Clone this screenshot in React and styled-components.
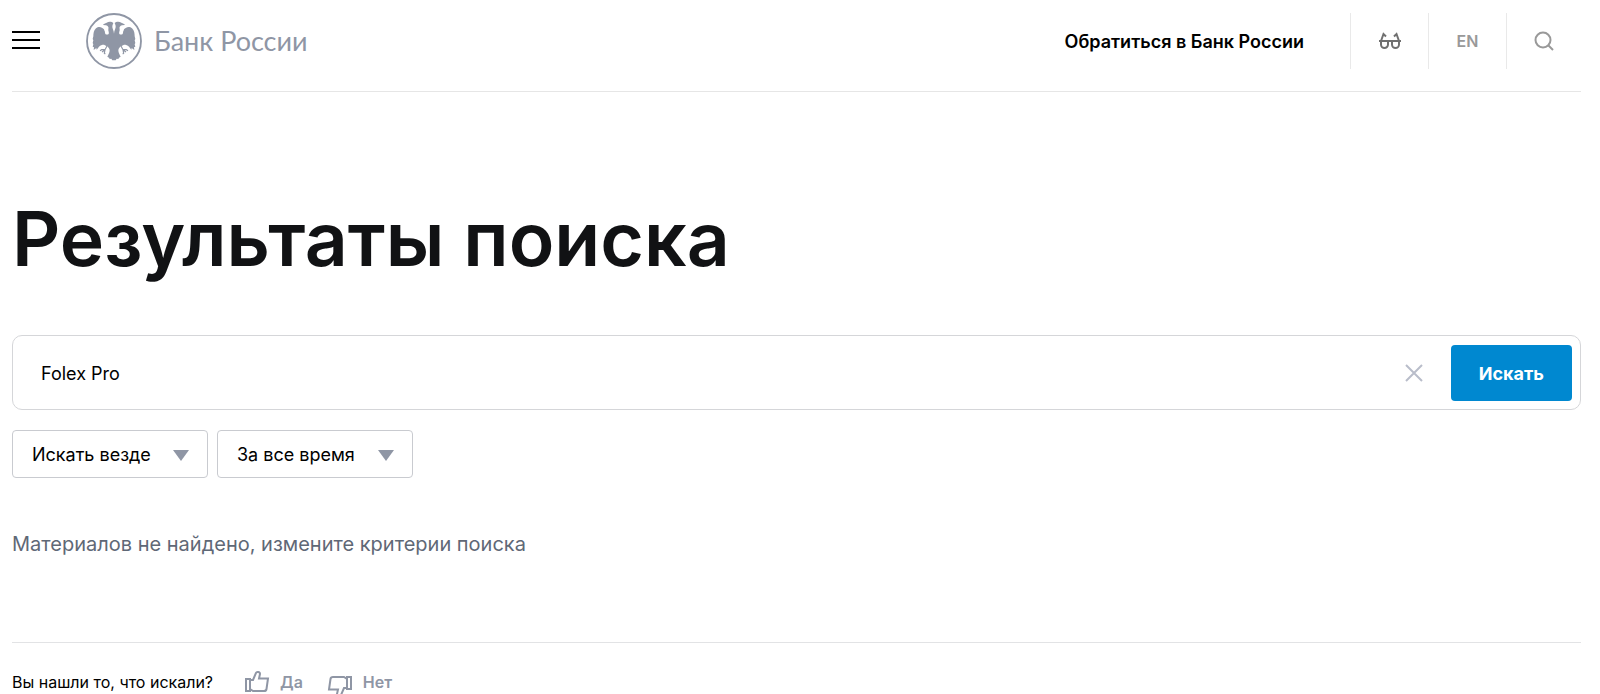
import React, { useState } from "react";
import styled, { createGlobalStyle } from "styled-components";

const GlobalStyle = createGlobalStyle`
  * {
    box-sizing: border-box;
  }
  body {
    margin: 0;
    background: #fff;
    color: #000;
    font-family: Inter, "Open Sans", sans-serif;
    font-size: 18px;
    line-height: 24px;
  }
  button, input, select {
    font: inherit;
    color: inherit;
  }
`;
const Page = styled.div`
  padding: 0 19px 0 12px;
`;
const Header = styled.header`
  display: flex;
  align-items: center;
  height: 92px;
  padding: 0 0 9px;
  border-bottom: 1px solid #e6e6e6;
`;
const IconButton = styled.button`
  display: flex;
  align-items: center;
  justify-content: center;
  padding: 0;
  border: none;
  background: transparent;
  color: ${(props) => props.$color || "#000"};
  cursor: pointer;
`;
const LogoLink = styled.a`
  display: flex;
  align-items: center;
  gap: 12px;
  margin-left: 46px;
  color: #8f96a5;
  font-family: Lato, sans-serif;
  font-size: 27px;
  line-height: 32px;
  text-decoration: none;
`;
const ContactLink = styled.a`
  margin-left: auto;
  margin-right: 46px;
  padding-top: 2px;
  color: #000;
  font-weight: 600;
  text-decoration: none;
`;
const Tools = styled.nav`
  display: flex;
`;
const Tool = styled.div`
  display: flex;
  align-items: center;
  justify-content: center;
  width: 78px;
  height: 56px;
  border-left: 1px solid #e9e9e9;
  &:last-child {
    width: 75px;
  }
`;
const LangLink = styled.a`
  color: #999;
  font-size: 16px;
  font-weight: 600;
  text-decoration: none;
`;
const Title = styled.h1`
  margin: 103px 0 0;
  color: #111214;
  font-size: 75px;
  font-weight: 600;
  line-height: 88px;
`;
const SearchForm = styled.form`
  display: flex;
  align-items: center;
  height: 75px;
  margin-top: 52px;
  padding: 8px;
  border: 1px solid #d5d6d9;
  border-radius: 10px;
`;
const SearchInput = styled.input`
  flex: 1;
  min-width: 0;
  padding: 2px 20px 0;
  border: none;
  outline: none;
  background: transparent;
`;
const SubmitButton = styled.button`
  height: 56px;
  margin-left: 28px;
  padding: 2px 28px 0;
  border: none;
  border-radius: 4px;
  background: #0088d0;
  color: #fff;
  font-weight: 700;
  cursor: pointer;
`;
const Filters = styled.div`
  display: flex;
  gap: 9px;
  margin-top: 20px;
`;
const SelectBox = styled.div`
  position: relative;
  svg {
    position: absolute;
    top: 20px;
    right: 19px;
    pointer-events: none;
  }
`;
const Select = styled.select`
  width: 196px;
  height: 48px;
  padding: 2px 40px 0 19px;
  border: 1px solid #c9cbd0;
  border-radius: 4px;
  appearance: none;
  background: #fff;
  cursor: pointer;
`;
const Message = styled.p`
  margin: 54px 0 86px;
  color: #5f6876;
  font-size: 20px;
`;
const Feedback = styled.footer`
  display: flex;
  align-items: center;
  height: 52px;
  padding-top: 27px;
  border-top: 1px solid #e2e3e5;
  font-size: 16px;
`;
const VoteButton = styled.button`
  display: flex;
  align-items: center;
  gap: 10px;
  margin-left: ${(props) => props.$gap};
  padding: 0;
  border: none;
  background: transparent;
  color: #8f96a5;
  font-weight: 600;
  cursor: pointer;
  svg {
    overflow: visible;
  }
`;

const WING =
  "M84 62 C84 52 78 46 79 39 C80 35 81 32 82 30 C78 26 68 25 62 29 C57 31 53 32 51 36 L60 37 C66 39 69 43 67 48 C66 54 70 58 68 63 C63 67 57 64 57 59 C57 54 54 53 54 49 C48 41 37 39 30 46 C23 53 22 62 22 70 L20 78 L22 82 L20 90 L22 94 L20 101 L24 103 L23 111 L31 105 L32 110 L39 101 C43 96 48 95 54 95 L61 99 C66 101 69 105 71 111 C71 119 67 125 64 131 L69 134 L71 138 L76 137 L79 142 L84 142 Z";
const LEG = "M63 99 L57 110 L47 110 L42 113 M56 111 L48 117 M57 110 L55 121 L58 123";

function Emblem() {
  const half = (
    <>
      <path d={WING} fill="currentColor" />
      <path d={LEG} fill="none" stroke="currentColor" strokeWidth="3.5" />
    </>
  );
  return (
    <svg width="56" height="56" viewBox="0 0 168 168" aria-hidden="true">
      <circle cx="84" cy="84" r="81" fill="none" stroke="currentColor" strokeWidth="5.5" />
      {half}
      <g transform="matrix(-1 0 0 1 168 0)">{half}</g>
    </svg>
  );
}

function Thumb({ down }) {
  return (
    <svg width="26" height="24" viewBox="0 0 26 24" fill="none" stroke="currentColor" strokeWidth="2" aria-hidden="true">
      <g transform={down ? "rotate(180 13 14)" : undefined}>
        <path d="M2 9 H6 V21 H2 Z" />
        <path d="M6 10 H9 L12 3 C12.500 1.500 16 1.500 16 4 L15 8.500 H24 L22.500 19 C22.300 20.500 21.500 21 20 21 H9 L6 19" />
      </g>
    </svg>
  );
}

function Filter({ label, options }) {
  return (
    <SelectBox>
      <Select aria-label={label}>
        {options.map((option) => (
          <option key={option}>{option}</option>
        ))}
      </Select>
      <svg width="16" height="11" viewBox="0 0 16 11" aria-hidden="true">
        <path d="M0 0 H16 L8 11 Z" fill="#8f96a5" />
      </svg>
    </SelectBox>
  );
}

function App() {
  const [query, setQuery] = useState("Folex Pro");

  return (
    <>
      <GlobalStyle />
      <Page>
        <Header>
          <IconButton type="button" aria-label="Меню">
            <svg width="28" height="20" viewBox="0 0 28 20" stroke="currentColor" strokeWidth="2">
              <path d="M0 1 H28 M0 9 H28 M0 17 H28" />
            </svg>
          </IconButton>
          <LogoLink href="/">
            <Emblem />
            Банк России
          </LogoLink>
          <ContactLink href="/reception">Обратиться в Банк России</ContactLink>
          <Tools>
            <Tool>
              <IconButton type="button" $color="#707070" aria-label="Версия для слабовидящих">
                <svg width="22" height="18" viewBox="0 0 22 18" fill="none" stroke="currentColor" strokeWidth="2">
                  <path d="M2 9 H9 V12.500 A3.500 3.500 0 0 1 2 12.500 Z M13 9 H20 V12.500 A3.500 3.500 0 0 1 13 12.500 Z" />
                  <path d="M0 9 H22 M2 9 L4.500 2 L7 4.500 M20 9 L17.500 2 L15 4.500" />
                </svg>
              </IconButton>
            </Tool>
            <Tool>
              <LangLink href="/eng">EN</LangLink>
            </Tool>
            <Tool>
              <IconButton type="button" $color="#999" aria-label="Поиск">
                <svg width="20" height="20" viewBox="0 0 20 20" fill="none" stroke="currentColor" strokeWidth="2">
                  <circle cx="9" cy="9" r="7.500" />
                  <path d="M14.500 14.500 L19 19" />
                </svg>
              </IconButton>
            </Tool>
          </Tools>
        </Header>

        <main>
          <Title>Результаты поиска</Title>
          <SearchForm onSubmit={(e) => e.preventDefault()}>
            <SearchInput
              type="text"
              aria-label="Поиск по сайту"
              value={query}
              onChange={(e) => setQuery(e.target.value)}
            />
            <IconButton type="button" $color="#b9bdca" aria-label="Очистить" onClick={() => setQuery("")}>
              <svg width="18" height="18" viewBox="0 0 18 18" stroke="currentColor" strokeWidth="2">
                <path d="M1 1 L17 17 M17 1 L1 17" />
              </svg>
            </IconButton>
            <SubmitButton type="submit">Искать</SubmitButton>
          </SearchForm>
          <Filters>
            <Filter label="Раздел" options={["Искать везде", "Новости"]} />
            <Filter label="Период" options={["За все время", "За год"]} />
          </Filters>
          <Message>Материалов не найдено, измените критерии поиска</Message>
        </main>

        <Feedback>
          <span>Вы нашли то, что искали?</span>
          <VoteButton type="button" $gap="31px">
            <Thumb />
            Да
          </VoteButton>
          <VoteButton type="button" $gap="24px">
            <Thumb down />
            Нет
          </VoteButton>
        </Feedback>
      </Page>
    </>
  );
}

export default App;
